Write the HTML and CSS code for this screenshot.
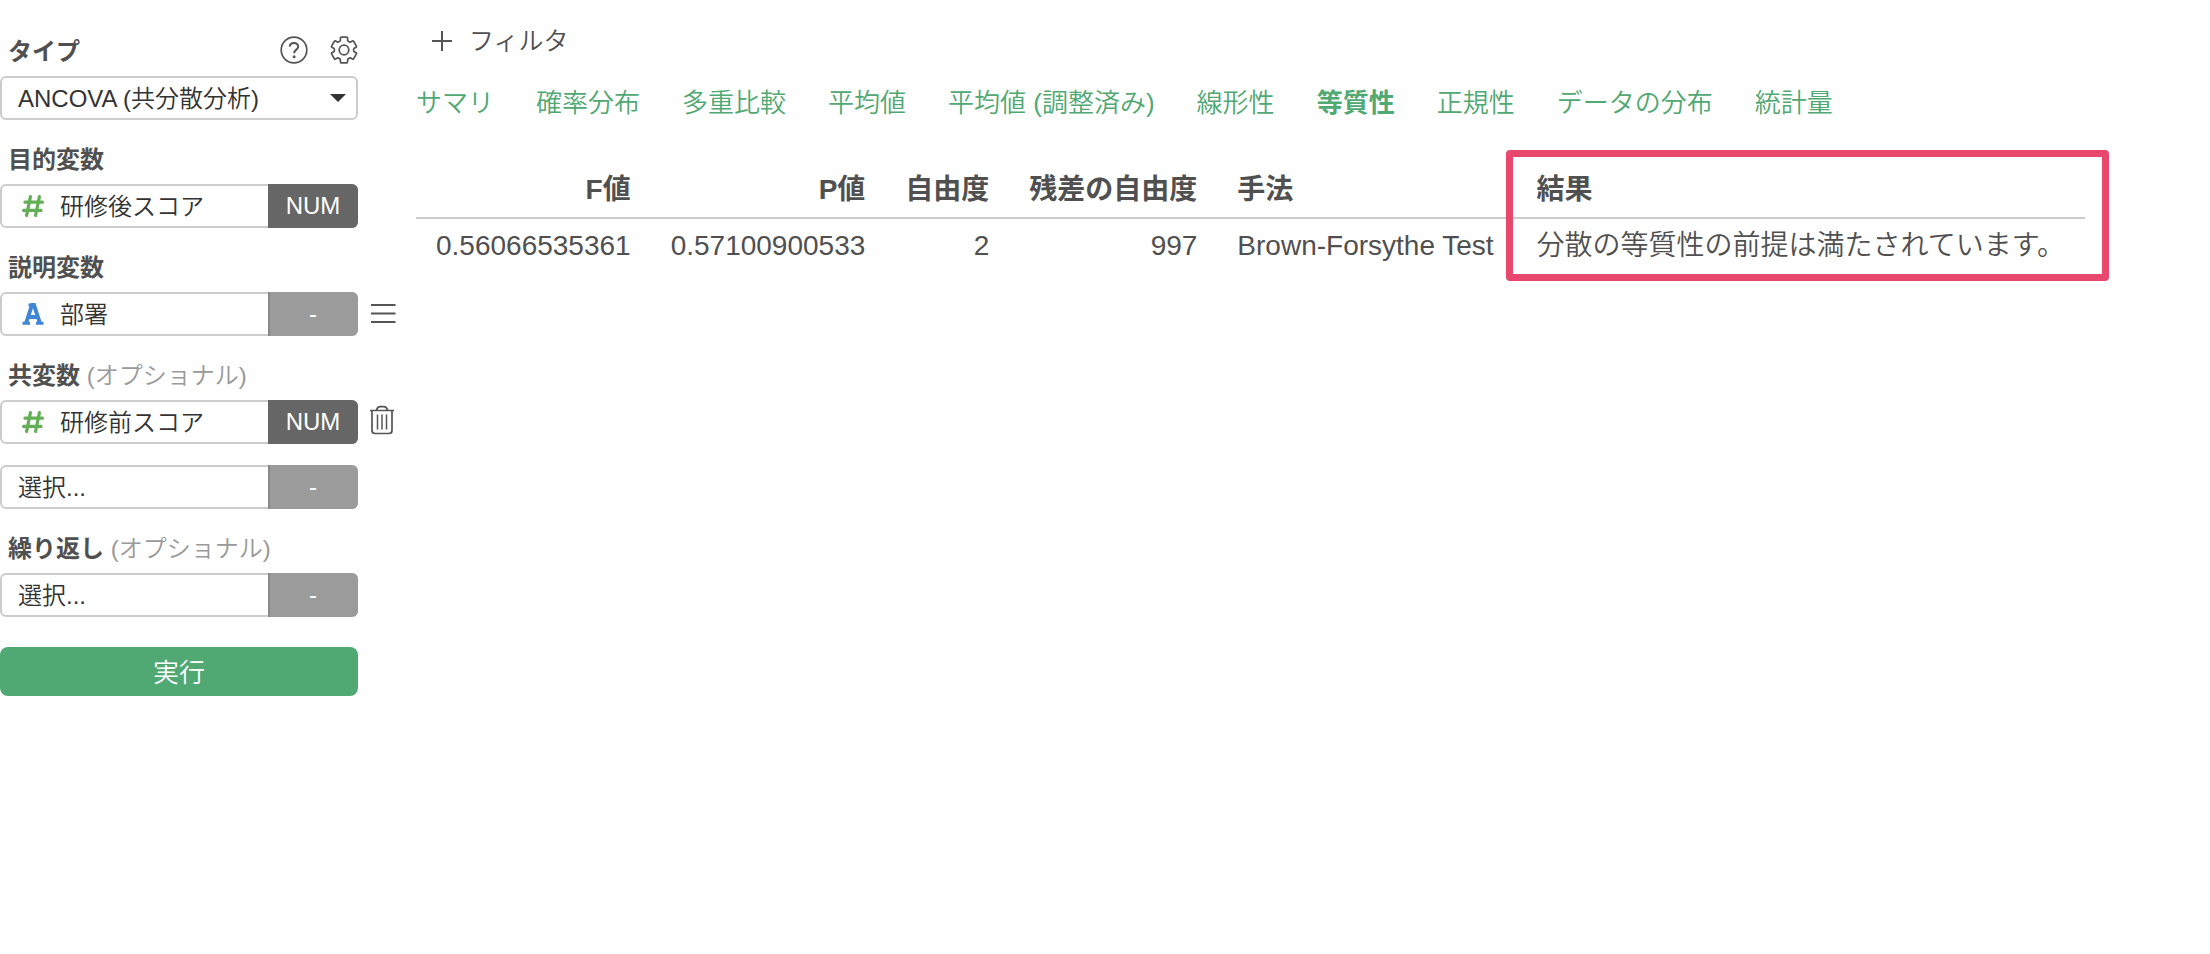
FILE: index.html
```html
<!DOCTYPE html>
<html lang="ja">
<head>
<meta charset="utf-8">
<title>ANCOVA (共分散分析)</title>
<link rel="stylesheet" href="styles.css">
</head>
<body>
<div class="app">
  <form class="sidebar">
    <div class="label-row">
      <label class="label" for="type">タイプ</label>
      <span class="tools">
        <button type="button" class="icon-button" aria-label="ヘルプ">
          <svg width="28" height="28" viewBox="-14 -14 28 28"><circle class="stroke" r="12.8"/><path class="stroke help" d="M-4.2-3.4C-4-8.4 4.4-8.3 4.2-3.2C4.1-.4.1-.2.1 3.2"/><circle class="dot" cx=".1" cy="6.8" r="1.5"/></svg>
        </button>
        <button type="button" class="icon-button" aria-label="設定">
          <svg width="28" height="28" viewBox="-14 -14 28 28"><path class="stroke" d="M-3.6-9.3V-12Q-3.6-12.8-2.8-12.8H2.8Q3.6-12.8 3.6-12V-9.3Q5-8 6.25-7.8L8.4-9Q9.1-9.4 9.6-8.7L12.4-3.9Q12.8-3.2 12.1-2.8L9.85-1.5Q9.2 0 9.85 1.5L12.1 2.8Q12.8 3.2 12.4 3.9L9.6 8.7Q9.1 9.4 8.4 9L6.25 7.8Q5 8 3.6 9.3V12Q3.6 12.8 2.8 12.8H-2.8Q-3.6 12.8-3.6 12V9.3Q-5 8-6.25 7.8L-8.4 9Q-9.1 9.4-9.6 8.7L-12.4 3.9Q-12.8 3.2-12.1 2.8L-9.85 1.5Q-9.2 0-9.85-1.5L-12.1-2.8Q-12.8-3.2-12.4-3.9L-9.6-8.7Q-9.1-9.4-8.4-9L-6.25-7.8Q-5-8-3.6-9.3Z"/><circle class="stroke" r="4.8"/></svg>
        </button>
      </span>
    </div>
    <div class="field">
      <select class="pick" id="type"><option>ANCOVA (共分散分析)</option></select>
      <svg class="caret" width="16" height="8" viewBox="0 0 16 8"><path d="M0 0H16L8 8Z"/></svg>
    </div>

    <div class="label-row"><label class="label" for="target">目的変数</label></div>
    <div class="field">
      <svg class="kind" width="22" height="22" viewBox="0 0 22 22"><path class="hash" d="M8.4 1.6L4.6 20.4M17.4 1.6L13.6 20.4M3 7.2H20.4M1.6 15.4H19"/></svg>
      <select class="pick" id="target"><option>研修後スコア</option></select>
      <button type="button" class="badge num">NUM</button>
    </div>

    <div class="label-row"><label class="label" for="explain">説明変数</label></div>
    <div class="line">
      <div class="field">
        <svg class="kind" width="22" height="22" viewBox="0 0 22 22"><path class="category" d="M4.300 19.500L10 2H12L17.700 19.500M6.500 14H15.500"/><path class="category foot" d="M.5 20.200H8M14 20.200H21.500M6.500 2H11"/></svg>
        <select class="pick" id="explain"><option>部署</option></select>
        <button type="button" class="badge">-</button>
      </div>
      <button type="button" class="icon-button" aria-label="メニュー">
        <svg width="28" height="28" viewBox="0 0 28 28"><path class="stroke bar" d="M2 5H26.500M2 13.500H26.500M2 22H26.500"/></svg>
      </button>
    </div>

    <div class="label-row"><label class="label" for="cov1">共変数 <span class="optional">(オプショナル)</span></label></div>
    <div class="stack">
      <div class="line">
        <div class="field">
          <svg class="kind" width="22" height="22" viewBox="0 0 22 22"><path class="hash" d="M8.4 1.6L4.6 20.4M17.4 1.6L13.6 20.4M3 7.2H20.4M1.6 15.4H19"/></svg>
          <select class="pick" id="cov1"><option>研修前スコア</option></select>
          <button type="button" class="badge num">NUM</button>
        </div>
        <button type="button" class="icon-button" aria-label="削除">
          <svg width="28" height="36" viewBox="0 0 28 36"><path class="stroke" d="M1 6.500H25M3 6.500V26.500Q3 29.500 6 29.500H20Q23 29.500 23 26.500V6.500M7.500 6Q8.500 2.700 11 2.700H15Q17.500 2.700 18.500 6"/><path class="stroke thin" d="M8.500 10.500V25.500M13 10.500V25.500M17.500 10.500V25.500"/></svg>
        </button>
      </div>
      <div class="field">
        <select class="pick" aria-label="共変数を追加"><option>選択...</option></select>
        <button type="button" class="badge">-</button>
      </div>
    </div>

    <div class="label-row"><label class="label" for="repeat">繰り返し <span class="optional">(オプショナル)</span></label></div>
    <div class="field">
      <select class="pick" id="repeat"><option>選択...</option></select>
      <button type="button" class="badge">-</button>
    </div>
    <button type="button" class="run">実行</button>
  </form>

  <main class="main">
    <button type="button" class="filter">
      <svg width="20" height="20" viewBox="0 0 20 20"><path class="stroke bar" d="M0 10H20M10 0V20"/></svg>
      フィルタ
    </button>
    <nav class="tabs">
      <a href="#">サマリ</a>
      <a href="#">確率分布</a>
      <a href="#">多重比較</a>
      <a href="#">平均値</a>
      <a href="#">平均値 (調整済み)</a>
      <a href="#">線形性</a>
      <a href="#" class="active" aria-current="page">等質性</a>
      <a href="#">正規性</a>
      <a href="#">データの分布</a>
      <a href="#">統計量</a>
    </nav>
    <table class="result">
      <thead>
        <tr><th class="n">F値</th><th class="n">P値</th><th class="n">自由度</th><th class="n">残差の自由度</th><th class="method">手法</th><th class="last">結果<span class="highlight"></span></th></tr>
      </thead>
      <tbody>
        <tr><td class="n">0.56066535361</td><td class="n">0.57100900533</td><td class="n">2</td><td class="n">997</td><td class="method">Brown-Forsythe Test</td><td class="last">分散の等質性の前提は満たされています。</td></tr>
      </tbody>
    </table>
  </main>
</div>
</body>
</html>
```
FILE: styles.css
```css
* { box-sizing: border-box; }

body {
  margin: 0;
  background: #fff;
  color: #505050;
  font-family: "Liberation Sans", "Noto Sans CJK JP", sans-serif;
  font-size: 24px;
  font-weight: 350;
}

button, select {
  margin: 0;
  padding: 0;
  border: 0;
  background: none;
  color: inherit;
  font: inherit;
}

svg { display: block; }
.stroke { fill: none; stroke: #555; stroke-width: 1.7; stroke-linejoin: round; }
.bar { stroke-width: 2; }
.thin { stroke-width: 1.5; }
.help { stroke-width: 2; }
.dot { fill: #555; }

.app {
  display: flex;
  align-items: flex-start;
  gap: 16px;
}

.sidebar {
  width: 400px;
  flex: none;
  padding-top: 12px;
}

.label-row {
  display: flex;
  align-items: center;
  justify-content: space-between;
  width: 358px;
  height: 64px;
  padding: 12px 0 0 8px;
}

.label { padding-top: 3px; font-weight: 700; line-height: 32px; }
.optional { color: #999; font-weight: 350; }

.tools { display: flex; gap: 22px; }
.icon-button { display: flex; align-items: center; }

.line { display: flex; align-items: center; gap: 11px; }
.stack { display: flex; flex-direction: column; gap: 21px; }

.field {
  position: relative;
  display: flex;
  align-items: center;
  width: 358px;
  height: 44px;
  border: 2px solid #ccc;
  border-radius: 6px;
}

.pick {
  flex: 1;
  min-width: 0;
  height: 40px;
  padding-left: 16px;
  appearance: none;
  color: #333;
}

.caret { position: absolute; right: 10px; top: 16px; fill: #333; pointer-events: none; }

.kind { flex: none; width: 22px; margin-left: 20px; }
.hash { fill: none; stroke: #64ae55; stroke-width: 3.2; stroke-linecap: round; }
.category { fill: none; stroke: #3f87d2; stroke-width: 4; }
.foot { stroke-width: 3; }

.badge {
  width: 90px;
  height: 44px;
  flex: none;
  margin-right: -2px;
  padding-right: 2px;
  border-left: 2px solid #888;
  border-radius: 0 6px 6px 0;
  background: #9b9b9b;
  color: #fff;
}
.num { background: #666; border-color: #666; }

.run {
  display: block;
  width: 358px;
  height: 49px;
  margin-top: 30px;
  padding-bottom: 3px;
  border-radius: 8px;
  background: #50a872;
  color: #fff;
  font-size: 26px;
}

.main { flex: 1; min-width: 0; padding-top: 20px; }

.filter {
  display: flex;
  align-items: center;
  gap: 17px;
  height: 42px;
  margin-left: 16px;
  font-size: 25px;
  line-height: 40px;
}

.tabs {
  display: flex;
  gap: 42px;
  padding-top: 21px;
  font-size: 26px;
  line-height: 40px;
  white-space: nowrap;
}
.tabs a { color: #50a872; text-decoration: none; }
.tabs .active { font-weight: 700; }

.result {
  margin-top: 35px;
  border-collapse: collapse;
  font-size: 28px;
  line-height: 40px;
  white-space: nowrap;
}
.result th {
  padding: 12px 20px 7px;
  border-bottom: 2px solid #ccc;
  text-align: left;
  font-weight: 700;
}
.result td { padding: 7px 20px; text-align: left; }
.result .n { text-align: right; }
.result .method { padding-right: 23px; }
.result .last { position: relative; }

.highlight {
  position: absolute;
  top: -8px;
  left: -11px;
  right: -24px;
  height: 131px;
  border: 7px solid #e8486e;
  border-radius: 4px;
}
```
